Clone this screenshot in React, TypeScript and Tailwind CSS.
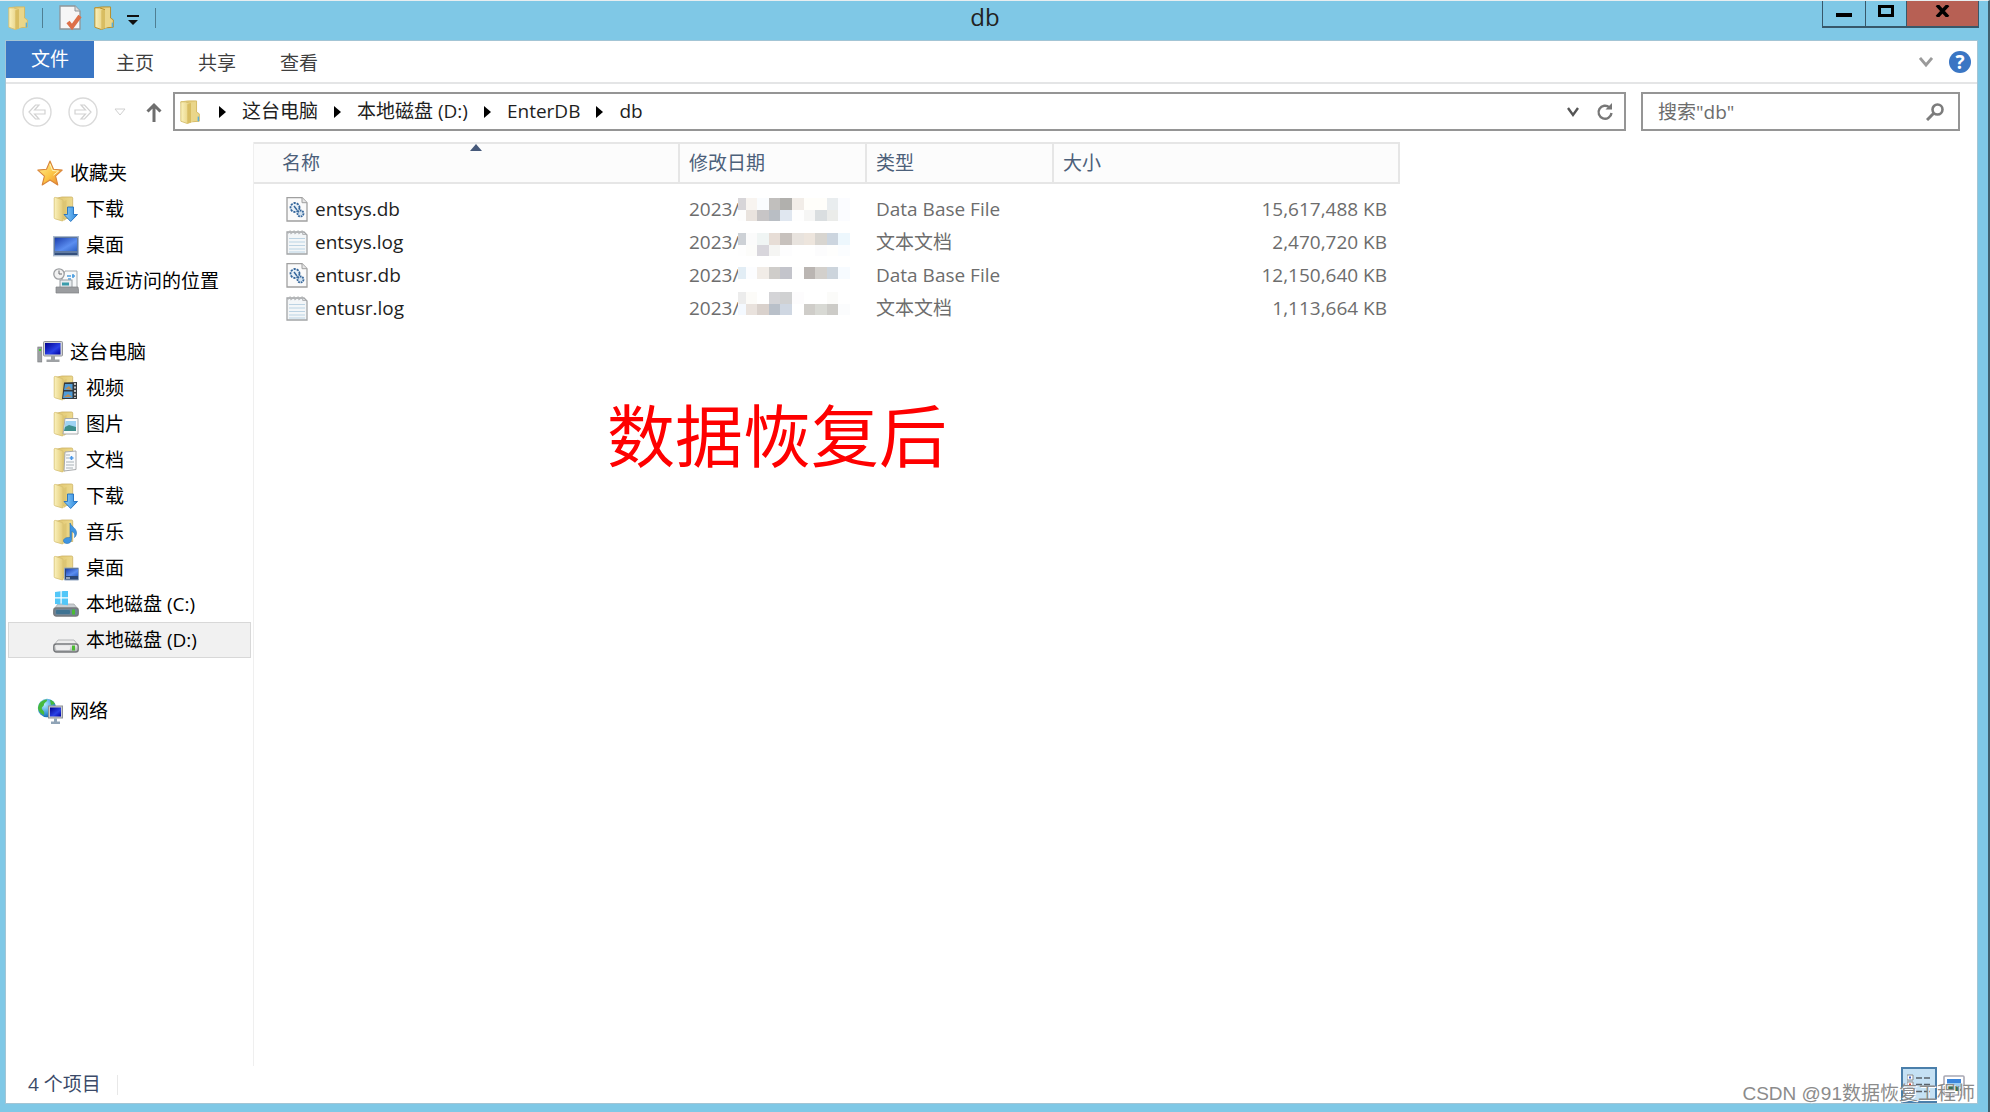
import type { ReactNode } from "react"

const FONT = "font-['Open_Sans','Noto_Sans_CJK_SC',sans-serif]"

interface FileRow {
  name: string
  kind: "db" | "log"
  type: string
  size: string
}

const FILES: FileRow[] = [
  { name: "entsys.db", kind: "db", type: "Data Base File", size: "15,617,488 KB" },
  { name: "entsys.log", kind: "log", type: "文本文档", size: "2,470,720 KB" },
  { name: "entusr.db", kind: "db", type: "Data Base File", size: "12,150,640 KB" },
  { name: "entusr.log", kind: "log", type: "文本文档", size: "1,113,664 KB" },
]

// Blurred-out part of each date: top edge, then one or two lines of cells
const MOSAIC: { top: number; lines: string[][] }[] = [
  { top: 5, lines: [
    ["#d7d5d8", "#f8f4f0", "#fafcfe", "#c1bfbd", "#b1b0ad", "#f2ede8", "#fffefa", "#fffefa", "#e9edef", "#fbfcff"],
    ["#fdfdfd", "#e9e3de", "#c7c5c6", "#b9bec4", "#e0e7f0", "#fefefe", "#f6f6f5", "#dadee0", "#ebecea", "#fbfcff"],
  ] },
  { top: 7, lines: [
    ["#cdd1d6", "#fbfbfb", "#f0f5f4", "#e7ddd6", "#c7c1bd", "#e8e3de", "#ede5dd", "#d8d5d0", "#ccd5df", "#edf7fd"],
    ["#fefefe", "#fcfcfa", "#d8d6dc", "#f5f5f3", "#fdfdfe", "#ffffff", "#ffffff", "#fcfcfd", "#fefefd", "#fbfdff"],
  ] },
  { top: 8, lines: [
    ["#e2edf5", "#fcfdff", "#f1ece7", "#cfcdca", "#c3c4cb", "#fefefe", "#bab5b2", "#d3d0cc", "#ccd4dc", "#f7fbff"],
  ] },
  { top: 0, lines: [
    ["#ececec", "#fcfbf8", "#ffffff", "#d4d4d7", "#d0d1d2", "#fdfcfd", "#ffffff", "#ffffff", "#fbfbf9", "#ffffff"],
    ["#f4f9ff", "#e9e2dd", "#d9d1cc", "#b9c0c9", "#cfd7e2", "#ffffff", "#cfcdc9", "#d8d9d4", "#cccbc7", "#fbfcfd"],
  ] },
]

function Mosaic({ row }: { row: number }) {
  const { top, lines } = MOSAIC[row]
  return (
    <svg width="114" height="33" viewBox="0 0 114 33" className="absolute left-[58px] top-0" shapeRendering="crispEdges" aria-hidden="true">
      <rect width="114" height="33" fill="#fff" />
      {lines.map((line, y) =>
        line.map((fill, x) => (
          <rect key={`${y}-${x}`} x={x === 0 ? 0 : x * 11.6 - 4} y={top + y * 11.6} width={x === 0 ? 7.6 : 11.6} height="11.6" fill={fill} />
        ))
      )}
    </svg>
  )
}

function Svg({ size = 26, children }: { size?: number; children: ReactNode }) {
  return (
    <svg width={size} height={size} viewBox="0 0 26 26" fill="none" className="shrink-0" aria-hidden="true">
      {children}
    </svg>
  )
}

function Gradients() {
  return (
    <svg width="0" height="0" className="absolute" aria-hidden="true">
      <defs>
        <linearGradient id="folder" x1="0" x2="1"><stop offset="0" stopColor="#fbf2bd" /><stop offset="1" stopColor="#e2ca76" /></linearGradient>
        <linearGradient id="folderBack" x1="0" x2="1"><stop offset="0" stopColor="#e0c46a" /><stop offset="1" stopColor="#ecd98e" /></linearGradient>
        <linearGradient id="star" x1="0" y1="0" x2="1" y2="1"><stop offset="0" stopColor="#fff3a0" /><stop offset="0.55" stopColor="#fcc545" /><stop offset="1" stopColor="#e8802e" /></linearGradient>
        <linearGradient id="screen" x1="0" y1="0" x2="1" y2="1"><stop offset="0" stopColor="#1c3fae" /><stop offset="0.6" stopColor="#5b8ef0" /><stop offset="1" stopColor="#2e62c8" /></linearGradient>
        <linearGradient id="deepScreen" x1="0" y1="0" x2="1" y2="1"><stop offset="0" stopColor="#00008f" /><stop offset="0.6" stopColor="#2a42e6" /><stop offset="1" stopColor="#0000a0" /></linearGradient>
        <linearGradient id="metal" x1="0" y1="0" x2="0" y2="1"><stop offset="0" stopColor="#f4f4f4" /><stop offset="1" stopColor="#a8abae" /></linearGradient>
        <linearGradient id="arrow" x1="0" x2="1"><stop offset="0" stopColor="#8fd0fa" /><stop offset="1" stopColor="#2c86dc" /></linearGradient>
        <radialGradient id="globe" cx="0.35" cy="0.3" r="0.8"><stop offset="0" stopColor="#b9ecff" /><stop offset="0.6" stopColor="#3d9bdc" /><stop offset="1" stopColor="#125a9c" /></radialGradient>
      </defs>
    </svg>
  )
}

function FolderShape() {
  return (
    <>
      <path d="M2 2.500 9 1h9.500a1.200 1.200 0 0 1 1.200 1.200V22.500H6Z" fill="url(#folderBack)" stroke="#cdb162" strokeWidth="0.800" />
      <path d="M1.200 2.200c0-.7.500-1 1.200-.8l6.800 2.200c.7.300 1 .8 1 1.500v19c0 .7-.5 1-1.200.8L2 22.800c-.6-.2-.8-.6-.8-1.200Z" fill="url(#folder)" stroke="#d6bf70" strokeWidth="0.800" />
      <path d="M11 5.500c1.500-1.400 2.500-1.500 2.500-1.500v19L10.600 25Z" fill="#ddc673" />
    </>
  )
}

function FolderIcon({ size = 26, bold = false }: { size?: number; bold?: boolean }) {
  return (
    <Svg size={size}>
      <path d="M2 2 10 1h9v12l3 2v8l-13 1Z" fill="url(#folderBack)" stroke={bold ? "#b78a22" : "#d4b962"} />
      <path d="M2 2h5l6 2v20l-4 1.500L2 23Z" fill="url(#folder)" stroke={bold ? "#b78a22" : "#d6bf70"} />
      <path d="M9 4.500 13 4v20l-4 1.500Z" fill="#d8bd62" />
      <path d="M13 3 18 2v20l-5 2Z" fill="#ead68a" />
      <path d="M21 18v5" stroke="#5aaed8" strokeWidth="1.600" />
    </Svg>
  )
}

type IconName = "star" | "download" | "desktop" | "recent" | "pc" | "video" | "picture" | "document" | "music" | "desktopFolder" | "diskC" | "diskD" | "network"

function Drive({ dark = false }: { dark?: boolean }) {
  return (
    <>
      <path d="M5 13h16l4 5H1Z" fill={dark ? "#c9ced2" : "#ededed"} stroke="#a7a9ab" strokeWidth="0.800" />
      <rect x="0.800" y="17" width="24.400" height="8" rx="2.500" fill={dark ? "#6e8496" : "url(#metal)"} stroke="#77797c" strokeWidth="1.400" />
      <rect x="3" y="19" width="14" height="4" rx="1" fill={dark ? "#3f7392" : "#eeeeee"} />
      <rect x="19" y="18.500" width="3" height="5" fill="#4bbb32" />
    </>
  )
}

function PlaceIcon({ name }: { name: IconName }) {
  switch (name) {
    case "star":
      return (
        <Svg>
          <path d="m13 1 3.500 8.300 8.700.8-6.600 6 2.200 8.900L13 20l-7.800 5 2.200-8.900-6.600-6 8.700-.8Z" fill="url(#star)" stroke="#d9853a" strokeWidth="1.100" strokeLinejoin="round" />
          <path d="m13 4 2.500 6.500 6 .6-5 4" stroke="#fff6bd" strokeWidth="1" />
        </Svg>
      )
    case "download":
      return (
        <Svg>
          <FolderShape />
          <path d="M14.500 11h6v7.500h4L17.700 25.500 11 18.500h3.500Z" fill="url(#arrow)" stroke="#1f6fc0" strokeWidth="0.900" />
        </Svg>
      )
    case "desktop":
      return (
        <Svg>
          <rect x="0.700" y="4.700" width="24.600" height="19" fill="#34507d" stroke="#a9b8cd" strokeWidth="1.400" />
          <rect x="2" y="6" width="22" height="13" fill="url(#screen)" />
          <path d="M2 20h22" stroke="#8da5c7" />
        </Svg>
      )
    case "recent":
      return (
        <Svg>
          <path d="M12 3h12v17H9V10Z" fill="#f7f9fa" stroke="#a5a9ac" />
          <path d="M14 8h4M15 11h3M20 6v4M19 8h3" stroke="#4d9ee0" strokeWidth="1.500" />
          <rect x="7" y="12" width="12" height="8" fill="#e9edf0" stroke="#9aa0a4" />
          <path d="M9 16h7" stroke="#3b9cab" strokeWidth="3" />
          <path d="M3 19h22l1 6H3Z" fill="#9b9da0" stroke="#7f8184" strokeWidth="0.700" />
          <circle cx="6" cy="6" r="5.200" fill="#f1f1f1" stroke="#9b9da0" strokeWidth="1.300" />
          <path d="M6 2.500V6h3" stroke="#6b6d70" />
        </Svg>
      )
    case "pc":
      return (
        <Svg>
          <rect x="0.800" y="8" width="4" height="15" fill="#9da0a3" stroke="#77797c" strokeWidth="0.600" />
          <path d="M2 10h2v2H2Z" fill="#40d428" />
          <rect x="6.500" y="2.500" width="19" height="14.500" rx="1" fill="#d1d3d5" stroke="#929598" />
          <rect x="8" y="4" width="15.500" height="11.500" fill="url(#deepScreen)" />
          <path d="M14 17h4v3.500h4.500V23h-13v-2.500H14Z" fill="#9ea1a4" />
        </Svg>
      )
    case "video":
      return (
        <Svg>
          <FolderShape />
          <path d="M11 7.500 24 7v17H9Z" fill="#34383c" />
          <path d="M12 9h7.500v6H11ZM11 16.500h8.500V23H10Z" fill="#4f9cd8" />
          <path d="m12 14 4-3 3 4ZM11 22l4-3 4 3Z" fill="#b98d56" />
          <path d="M22 8v15" stroke="#e4e6e8" strokeWidth="1.600" strokeDasharray="2 1.500" />
        </Svg>
      )
    case "picture":
      return (
        <Svg>
          <FolderShape />
          <path d="M12 7.500h13V23H10Z" fill="#fafafa" stroke="#a8aaac" />
          <path d="M12.500 10H23v10H11Z" fill="#9ed2f3" />
          <path d="m12 16 4-2 7 2v4H11Z" fill="#3d8f8d" />
        </Svg>
      )
    case "document":
      return (
        <Svg>
          <FolderShape />
          <path d="m12 5 11-1v18.500l-12 1.500Z" fill="#f9fafb" stroke="#a8aaac" />
          <path d="M13 8h4M13 11h3M13 15h8M13 18h8M13 21h7" stroke="#aab1b8" strokeWidth="1.200" />
          <path d="M16.500 11h4M18.500 9v4" stroke="#4a97e8" strokeWidth="1.600" />
        </Svg>
      )
    case "music":
      return (
        <Svg>
          <FolderShape />
          <path d="M17 4c1.500 4 6.500 5 6.500 10 0 2-1 3.500-2 4.500 1-4-1-5.500-3-6v8c0 2.500-2 4-4.500 4S10.500 23 10.500 21.500s2.500-3.500 6.500-3Z" fill="#3f95e2" stroke="#2672b6" strokeWidth="0.600" />
        </Svg>
      )
    case "desktopFolder":
      return (
        <Svg>
          <FolderShape />
          <path d="M11.500 13h14v12h-14Z" fill="#2b4775" stroke="#93a8c4" />
          <path d="M13 14h12v7H13Z" fill="url(#screen)" />
          <path d="M13 23h4" stroke="#fff" />
        </Svg>
      )
    case "diskC":
      return (
        <Svg>
          <Drive dark />
          <path d="m2 1 5.500-.7v6H2ZM8.700.2 15-.5v6.800H8.700ZM2 7.500h5.500v6L2 13ZM8.700 7.500H15v6.800l-6.300-.7Z" fill="#53c7f8" />
        </Svg>
      )
    case "diskD":
      return <Svg><Drive /></Svg>
    case "network":
      return (
        <Svg>
          <circle cx="10" cy="10" r="9.200" fill="url(#globe)" />
          <path d="M2 6c2-3 5-4.500 8-4.500 1 2-3 3-3 5S4 9 5 11s3 2 2 6C4 16 1 13 1 9.500ZM13 2c2 0 4 2 5 4l-4 1Z" fill="#46b93c" />
          <rect x="11.500" y="8" width="14" height="12" fill="#c9cccf" stroke="#8f9295" />
          <rect x="13" y="9.500" width="11" height="9" fill="url(#deepScreen)" />
          <path d="M17 20.500h3v3h3V26h-9v-2.500h3Z" fill="#8fa3b6" />
        </Svg>
      )
  }
}

function FileIcon({ kind }: { kind: "db" | "log" }) {
  if (kind === "log") {
    return (
      <svg width="22" height="26" viewBox="0 0 22 26" fill="none" className="shrink-0" aria-hidden="true">
        <path d="M1 2h17l3 3v19H1Z" fill="#f3f6f8" stroke="#a3a5a7" strokeWidth="1.300" />
        <path d="M2 3.500 4 1l1 2.500L8 1l1 2.500L12 1l1 2.500L16 1l1 3.500h3" stroke="#b3b5b7" strokeWidth="1.200" />
        <path d="M3 8.500h16M3 12h16M3 15.500h16M3 19h16M3 22h16" stroke="#bcd3e3" strokeWidth="1.200" />
      </svg>
    )
  }
  return (
    <svg width="22" height="26" viewBox="0 0 22 26" fill="none" className="shrink-0" aria-hidden="true">
      <path d="M1 .7h15l5 5V24H1Z" fill="#fafafa" stroke="#a0a0a0" strokeWidth="1.300" />
      <path d="M16 .7v5h5" fill="#e6e6e6" stroke="#a0a0a0" />
      <circle cx="9" cy="10.500" r="4.500" fill="#e7eff6" stroke="#35669b" strokeWidth="1.800" strokeDasharray="2.200 1" />
      <path d="m8 9 3 4" stroke="#35669b" strokeWidth="1.400" />
      <circle cx="14.500" cy="16.500" r="3" fill="#d3e2ef" stroke="#35669b" strokeWidth="1.800" strokeDasharray="1.800 0.800" />
    </svg>
  )
}

interface Place {
  icon: IconName
  label: string
  selected?: boolean
}

const GROUPS: { root: Place; items: Place[] }[] = [
  {
    root: { icon: "star", label: "收藏夹" },
    items: [
      { icon: "download", label: "下载" },
      { icon: "desktop", label: "桌面" },
      { icon: "recent", label: "最近访问的位置" },
    ],
  },
  {
    root: { icon: "pc", label: "这台电脑" },
    items: [
      { icon: "video", label: "视频" },
      { icon: "picture", label: "图片" },
      { icon: "document", label: "文档" },
      { icon: "download", label: "下载" },
      { icon: "music", label: "音乐" },
      { icon: "desktopFolder", label: "桌面" },
      { icon: "diskC", label: "本地磁盘 (C:)" },
      { icon: "diskD", label: "本地磁盘 (D:)", selected: true },
    ],
  },
  { root: { icon: "network", label: "网络" }, items: [] },
]

function TitleBar() {
  return (
    <header className="-mr-0.5 flex h-10 items-start">
      <div className="flex h-[34px] flex-1 items-center pl-px">
        <FolderIcon size={24} />
        <span className="ml-[11px] h-5 w-px bg-[#4f7f93]" />
        <button aria-label="属性" className="ml-4">
          <svg width="24" height="26" viewBox="0 0 24 26" fill="none">
            <path d="M1 1h15l5 5v18H1Z" fill="#f6f6f6" stroke="#8f9599" strokeWidth="1.300" />
            <path d="M16 1v5h5" fill="#ddd" stroke="#8f9599" />
            <path d="m9 17 4 5 8-11" stroke="#dd7048" strokeWidth="4" />
          </svg>
        </button>
        <button aria-label="新建文件夹" className="ml-2.5">
          <FolderIcon size={24} bold />
        </button>
        <button aria-label="自定义快速访问工具栏" className="ml-2.5 pt-1">
          <svg width="12" height="12" viewBox="0 0 12 12"><path d="M0 1h12v2H0ZM1 6h10l-5 5Z" fill="#111" /></svg>
        </button>
        <span className="ml-4 h-5 w-px bg-[#4f7f93]" />
      </div>
      <h1 className="mr-4 text-2xl leading-8 text-[#222]">db</h1>
      <div className="flex flex-1 justify-end">
        <div className="flex h-[27px] border-x border-b-2 border-[#37586a]">
          <button aria-label="最小化" className="flex w-[43px] justify-center border-r border-[#37586a] pt-3">
            <span className="h-1 w-4 bg-black" />
          </button>
          <button aria-label="最大化" className="flex w-10 justify-center pt-1">
            <span className="h-3 w-4 border-[3px] border-black" />
          </button>
          <button aria-label="关闭" className="flex w-[72px] justify-center border-l border-[#37586a] bg-[#b76054] pt-1">
            <svg width="15" height="12" viewBox="0 0 15 12"><path d="m2 0 11 12M13 0 2 12" stroke="#000" strokeWidth="3.500" /></svg>
          </button>
        </div>
      </div>
    </header>
  )
}

function Ribbon() {
  return (
    <nav className="flex h-[43px] items-start border-b-2 border-[#e4e5e6] text-[19px]">
      <button className="h-[37px] w-[88px] bg-[#3a76c4] leading-[37px] text-white">文件</button>
      {["主页", "共享", "查看"].map((tab) => (
        <button key={tab} className="w-[82px] pt-1 leading-9 text-[#3f3f3f]">{tab}</button>
      ))}
      <div className="ml-auto flex h-[41px] items-center gap-4 pr-1.5">
        <button aria-label="展开功能区">
          <svg width="14" height="12" viewBox="0 0 14 12" fill="none"><path d="m1 2 6 7 6-7" stroke="#9a9a9a" strokeWidth="2.800" /></svg>
        </button>
        <button aria-label="帮助" className="size-[22px] rounded-full bg-[#3a76c4] text-[19px] leading-[22px] font-bold text-white">?</button>
      </div>
    </nav>
  )
}

function NavCircle({ label, flip }: { label: string; flip?: boolean }) {
  return (
    <button aria-label={label}>
      <svg width="30" height="30" viewBox="0 0 30 30" fill="none" className={flip ? "rotate-180" : ""}>
        <circle cx="15" cy="15" r="14" stroke="#dadada" strokeWidth="1.400" />
        <path d="m7 15 6.500-7H17l-4.500 5H23v4H12.500l4.500 5h-3.500Z" stroke="#d2d2d2" strokeWidth="1.200" />
      </svg>
    </button>
  )
}

const Crumb = ({ children }: { children: string }) => (
  <>
    <svg width="7" height="12" viewBox="0 0 7 12" aria-hidden="true"><path d="M0 0v12l7-6Z" fill="#000" /></svg>
    <button className="pb-0.5 text-[#1e1e1e]">{children}</button>
  </>
)

function AddressRow() {
  return (
    <div className="flex h-[58px] items-start pt-2 pr-[17px] text-[19px] leading-[34px]">
      <div className="flex h-[39px] w-[167px] items-center pl-4">
        <NavCircle label="后退" />
        <span className="w-4" />
        <NavCircle label="前进" flip />
        <button aria-label="最近位置" className="ml-4">
          <svg width="12" height="8" viewBox="0 0 12 8" fill="none"><path d="M1 1h10L6 7Z" stroke="#d0d0d0" /></svg>
        </button>
        <button aria-label="上移" className="ml-5">
          <svg width="16" height="20" viewBox="0 0 16 20" fill="none"><path d="M8 20V3M1.500 9.500 8 3l6.500 6.500" stroke="#6e6e6e" strokeWidth="3" /></svg>
        </button>
      </div>
      <div className="flex h-[39px] flex-1 items-center gap-4 border-2 border-[#959595] pl-1">
        <FolderIcon size={24} />
        <Crumb>这台电脑</Crumb>
        <Crumb>本地磁盘 (D:)</Crumb>
        <Crumb>EnterDB</Crumb>
        <Crumb>db</Crumb>
        <div className="ml-auto flex items-center gap-4 pr-2.5">
          <button aria-label="历史记录">
            <svg width="14" height="12" viewBox="0 0 14 12" fill="none"><path d="m2 2 5 7 5-7" stroke="#555" strokeWidth="2.400" /></svg>
          </button>
          <button aria-label="刷新">
            <svg width="18" height="20" viewBox="0 0 18 20" fill="none">
              <path d="M13.500 5.500A6.500 6.500 0 1 0 15.500 11" stroke="#777" strokeWidth="2.400" />
              <path d="M9.500 7.500H16V1Z" fill="#777" />
            </svg>
          </button>
        </div>
      </div>
      <label className="ml-[15px] flex h-[39px] w-[319px] items-center border-2 border-[#959595] pl-[15px]">
        <input type="search" aria-label="搜索" placeholder={'搜索"db"'} className="w-0 flex-1 outline-none placeholder:text-[#6d6d6d]" />
        <svg width="18" height="18" viewBox="0 0 18 18" fill="none" className="mr-3.5" aria-hidden="true">
          <circle cx="11.500" cy="6.500" r="5" stroke="#7c7c7c" strokeWidth="2.600" />
          <path d="m8 10-7 7" stroke="#7c7c7c" strokeWidth="3" />
        </svg>
      </label>
    </div>
  )
}

function PlaceRow({ place, nested }: { place: Place; nested?: boolean }) {
  return (
    <li>
      <button
        className={`flex h-9 w-full items-center gap-[7px] border text-left text-black ${nested ? "pl-11" : "pl-7"} ${place.selected ? "border-[#d8d8d8] bg-[#f1f1f1]" : "border-transparent"}`}
      >
        <PlaceIcon name={place.icon} />
        <span>{place.label}</span>
      </button>
    </li>
  )
}

function Sidebar() {
  return (
    <aside className="flex w-[248px] shrink-0 flex-col gap-[35px] border-r border-[#efefef] pt-[13px] pr-0.5 pl-0.5 text-[19px] leading-[34px]">
      {GROUPS.map(({ root, items }) => (
        <ul key={root.label}>
          <PlaceRow place={root} />
          {items.map((item) => (
            <PlaceRow key={item.label} place={item} nested />
          ))}
        </ul>
      ))}
    </aside>
  )
}

function FileTable() {
  return (
    <table className="w-[1146px] table-fixed border-separate border-spacing-0 text-left text-[19px]">
      <colgroup>
        <col className="w-[426px]" />
        <col className="w-[187px]" />
        <col className="w-[187px]" />
        <col />
      </colgroup>
      <thead>
        <tr className="h-[42px]">
          {["名称", "修改日期", "类型", "大小"].map((head, i) => (
            <th key={head} className={`relative border-y-2 border-r-2 border-[#e6e6e6] bg-[#fcfcfc] p-0 font-normal text-[#4c607a] ${i === 0 ? "pl-7" : "pl-[9px]"}`}>
              {head}
              {i === 0 && (
                <svg width="12" height="7" viewBox="0 0 12 7" className="absolute top-0 left-[216px]" aria-hidden="true"><path d="M0 7 6 0l6 7Z" fill="#46597a" /></svg>
              )}
            </th>
          ))}
        </tr>
      </thead>
      <tbody className="text-[#6d6d6d] before:block before:h-[9px] before:content-['']">
        {FILES.map((file, i) => (
          <tr key={file.name} className="h-[33px]">
            <td className="p-0 pl-8">
              <div className="flex items-center gap-[7px] leading-[33px] text-[#1e1e1e]">
                <FileIcon kind={file.kind} />
                {file.name}
              </div>
            </td>
            <td className="relative p-0 pl-[9px] leading-[33px]">
              2023/
              <Mosaic row={i} />
            </td>
            <td className="p-0 pl-[9px] leading-[33px]">{file.type}</td>
            <td className="p-0 pr-[13px] text-right leading-[33px]">{file.size}</td>
          </tr>
        ))}
      </tbody>
    </table>
  )
}

function StatusBar() {
  return (
    <footer className="relative flex h-[37px] items-center pl-[22px] text-[19px] text-[#3b4a69]">
      <span>4 个项目</span>
      <span className="ml-4 h-5 w-px bg-[#e8e8e8]" />
      <div className="ml-auto flex items-end gap-1.5 pr-3">
        <button aria-label="详细信息" className="flex size-9 items-center justify-center border-2 border-[#4a7fab] bg-[#c5e1f4]">
          <svg width="24" height="22" viewBox="0 0 24 22" fill="none">
            <path d="M0 1h6v5H0ZM0 8h6v5H0ZM0 15h6v5H0Z" fill="#fff" stroke="#8a8a8a" />
            <path d="M2 3.500h2M2 17.500h2" stroke="#3c62c8" strokeWidth="2" />
            <path d="M2 10.500h2" stroke="#d84434" strokeWidth="2" />
            <path d="M9 4h6M17 4h6M9 10.500h6M17 10.500h6M9 17.500h6M17 17.500h6" stroke="#58616a" strokeWidth="1.600" />
          </svg>
        </button>
        <button aria-label="大缩略图" className="pb-1">
          <svg width="22" height="24" viewBox="0 0 22 24" fill="none">
            <rect x="1" y="1" width="20" height="19" rx="1" fill="#fff" stroke="#a8a8b4" strokeWidth="1.600" />
            <path d="M4 4h14v12H4Z" fill="#9ccdf3" />
            <path d="M4 4h14v4H4Z" fill="#3c86dc" />
            <path d="m4 11 5-2 9 5v2H4Z" fill="#3b7055" />
          </svg>
        </button>
      </div>
      <p className="absolute right-0.5 -bottom-[5px] text-[19px] leading-7 whitespace-nowrap text-[#8b8b8b] [text-shadow:1px_1px_0_#fff]">
        <span className="font-['Liberation_Sans']">CSDN @91</span>数据恢复工程师
      </p>
    </footer>
  )
}

export default function App() {
  return (
    <div className={`flex min-h-screen flex-col border-t border-r-2 border-t-[#e8eef0] border-r-[#40606e] bg-[#7fc8e6] pr-[11px] pb-[9px] pl-1.5 ${FONT}`}>
      <Gradients />
      <TitleBar />
      <div className="flex flex-1 flex-col bg-white shadow-[0_0_0_1px_#a3c5d5]">
        <Ribbon />
        <AddressRow />
        <div className="flex flex-1">
          <Sidebar />
          <main className="min-w-0 flex-1">
            <FileTable />
            <p className="pt-[58px] pl-[353px] font-['Noto_Sans_CJK_SC',sans-serif] text-[68px] leading-[100px] text-[#fe0000]">数据恢复后</p>
          </main>
        </div>
        <StatusBar />
      </div>
    </div>
  )
}
